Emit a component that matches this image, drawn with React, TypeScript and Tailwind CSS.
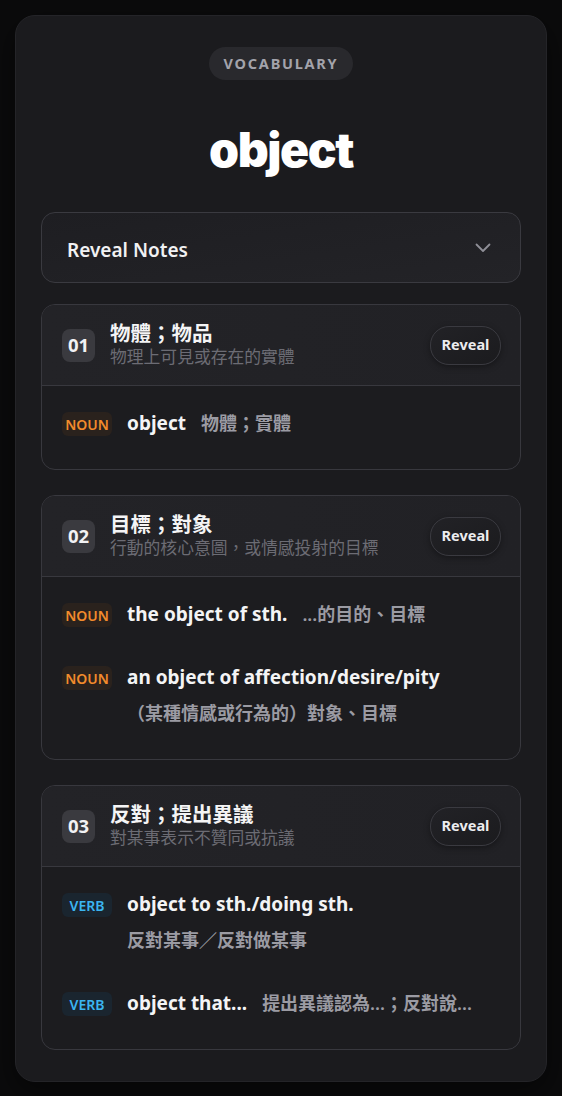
import React from "react";

type Entry = { pos: "NOUN" | "VERB"; main: string; def: string };
type Sense = { no: string; title: string; sub: string; entries: Entry[] };

const senses: Sense[] = [
  {
    no: "01",
    title: "物體；物品",
    sub: "物理上可見或存在的實體",
    entries: [{ pos: "NOUN", main: "object", def: "物體；實體" }],
  },
  {
    no: "02",
    title: "目標；對象",
    sub: "行動的核心意圖，或情感投射的目標",
    entries: [
      { pos: "NOUN", main: "the object of sth.", def: "...的目的、目標" },
      { pos: "NOUN", main: "an object of affection/desire/pity", def: "（某種情感或行為的）對象、目標" },
    ],
  },
  {
    no: "03",
    title: "反對；提出異議",
    sub: "對某事表示不贊同或抗議",
    entries: [
      { pos: "VERB", main: "object to sth./doing sth.", def: "反對某事／反對做某事" },
      { pos: "VERB", main: "object that...", def: "提出異議認為...；反對說..." },
    ],
  },
];

function Tag({ pos }: { pos: "NOUN" | "VERB" }) {
  if (pos === "NOUN") {
    return (
      <span className="mt-[4px] flex h-[24px] w-[50px] shrink-0 items-center justify-center rounded-[6px] bg-[#2a221d] pt-[1px] text-[14px] font-semibold text-[#f28b2c]">
        NOUN
      </span>
    );
  }
  return (
    <span className="mt-[4px] flex h-[24px] w-[50px] shrink-0 items-center justify-center rounded-[6px] bg-[#1a252f] pt-[1px] text-[14px] font-semibold text-[#3bb5f1]">
      VERB
    </span>
  );
}

function SenseCard({ s }: { s: Sense }) {
  return (
    <div className="overflow-hidden rounded-[14px] border border-[#38383e] bg-[#1c1c1f]">
      <div className="flex h-[81px] items-center border-b border-[#38383e] bg-gradient-to-r from-[#232327] to-[#212125] pl-[20px] pr-[19px]">
        <div className="flex h-[33px] w-[33px] shrink-0 items-center justify-center rounded-[8px] bg-[#3a3a3f] text-[18.5px] font-bold text-[#f2f2f4]">
          {s.no}
        </div>
        <div className="ml-[15px] flex min-w-0 flex-1 flex-col">
          <div className="text-[20.5px] font-bold leading-[24px] text-[#f4f4f5]">{s.title}</div>
          <div className="text-[16.8px] leading-[24px] text-[#6c6c74]">{s.sub}</div>
        </div>
        <button className="flex h-[39px] w-[71px] shrink-0 items-center justify-center rounded-[19px] border border-[#3a3a40] bg-gradient-to-br from-[#222226] to-[#1b1b1e] text-[14.5px] font-bold text-[#ececee] shadow-[0_2px_6px_rgba(0,0,0,0.35)]">
          Reveal
        </button>
      </div>
      <div className="flex flex-col gap-[33px] pb-[31px] pl-[20px] pr-[18px] pt-[22px]">
        {s.entries.map((e, i) => (
          <div key={i} className="flex items-start">
            <Tag pos={e.pos} />
            <div className="ml-[15px] flex min-w-0 flex-1 flex-wrap items-baseline gap-x-[15px] gap-y-[6px]">
              <span className="text-[19px] font-bold leading-[30px] text-[#f4f4f5]">{e.main}</span>
              <span className="text-[18px] font-semibold leading-[30px] text-[#9b9ba3]">{e.def}</span>
            </div>
          </div>
        ))}
      </div>
    </div>
  );
}

export default function App() {
  return (
    <div
      className="min-h-[1096px] bg-[#0b0b0c] p-[15px]"
      style={{ fontFamily: '"Noto Sans", "Noto Sans CJK TC", sans-serif' }}
    >
      <div className="flex flex-col rounded-[20px] border border-[#242428] bg-[#1b1b1e] px-[25px] pb-[31px] pt-[31px] shadow-[0_10px_30px_rgba(0,0,0,0.5)]">
        <div className="flex justify-center">
          <span className="flex h-[33px] items-center rounded-full bg-[#29292d] px-[15px] text-[14.5px] font-bold tracking-[0.12em] text-[#a3a3ab]">
            VOCABULARY
          </span>
        </div>
        <h1
          className="mt-[46px] text-center text-[48px] font-black leading-none tracking-[-0.03em] text-white"
          style={{ fontFamily: 'Inter, "Noto Sans", sans-serif' }}
        >
          object
        </h1>
        <div className="mt-[38px] flex h-[71px] items-center justify-between rounded-[14px] border border-[#3a3a40] bg-gradient-to-br from-[#1e1e22] to-[#232327] pl-[25px] pr-[29px]">
          <span className="pt-[5px] text-[19px] font-semibold text-[#f1f1f3]">Reveal Notes</span>
          <svg width="16" height="10" viewBox="0 0 16 10" fill="none">
            <path d="M1.5 1.5 L8 8 L14.5 1.5" stroke="#8f8f97" strokeWidth="1.8" strokeLinecap="round" strokeLinejoin="round" />
          </svg>
        </div>
        <div className="mt-[21px] flex flex-col gap-[25px]">
          {senses.map((s) => (
            <SenseCard key={s.no} s={s} />
          ))}
        </div>
      </div>
    </div>
  );
}
